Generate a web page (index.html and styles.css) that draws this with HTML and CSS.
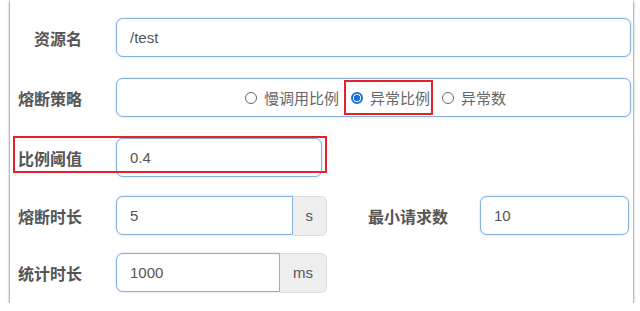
FILE: index.html
```html
<!DOCTYPE html>
<html lang="zh-CN">
<head>
    <meta charset="UTF-8">
    <title>熔断规则</title>
    <link rel="stylesheet" href="styles.css">
</head>
<body>
    <div class="card">
        <div class="row">
            <div class="label">资源名</div>
            <div class="field wide">/test</div>
        </div>
        <div class="row">
            <div class="label">熔断策略</div>
            <div class="field wide radio-group">
                <span class="option"><span class="dot"></span>慢调用比例</span>
                <span class="option marked"><span class="dot checked"></span>异常比例</span>
                <span class="option"><span class="dot"></span>异常数</span>
            </div>
        </div>
        <div class="row ratio-row">
            <!-- rote Markierung liegt über Label und Feld -->
            <div class="mark-box"></div>
            <div class="label">比例阈值</div>
            <div class="field ratio">0.4</div>
        </div>
        <div class="row time-row">
            <div class="label">熔断时长</div>
            <div class="group">
                <div class="field">5</div>
                <div class="addon">s</div>
            </div>
            <div class="label min-label">最小请求数</div>
            <div class="field count">10</div>
        </div>
        <div class="row last-row">
            <div class="label">统计时长</div>
            <div class="group">
                <div class="field">1000</div>
                <div class="addon">ms</div>
            </div>
        </div>
    </div>
</body>
</html>
```

FILE: styles.css
```css
html, body {
    margin: 0;
    background: #fff;
}
body {
    font-family: "Liberation Sans", Arial, "Noto Sans CJK SC", sans-serif;
    color: #555;
}
.card {
    box-sizing: border-box;
    height: 303px;
    margin: 0 7px 0 10px;
    padding-top: 18px;
    background: #fff;
    box-shadow: 0 2px 2px rgba(0, 0, 0, 0.5), -1px 0 2px rgba(0, 0, 0, 0.18), 1px 0 2px rgba(0, 0, 0, 0.18);
}
.row {
    position: relative;
    display: flex;
    align-items: center;
    height: 39px;
    margin-bottom: 21px;
}
.ratio-row {
    margin-bottom: 19px;
}
.time-row {
    margin-bottom: 18px;
}
.last-row {
    margin-bottom: 0;
}
.label {
    width: 72px;
    margin-right: 34px;
    text-align: right;
    font-family: "Noto Sans CJK SC", sans-serif;
    font-size: 16px;
    font-weight: bold;
    color: #555;
    flex-shrink: 0;
}
.field {
    box-sizing: border-box;
    height: 39px;
    display: flex;
    align-items: center;
    padding-left: 13px;
    border: 1px solid #86b0de;
    border-radius: 7px;
    box-shadow: 0 0 2px rgba(102, 160, 225, 0.5);
    font-size: 15px;
    color: #555;
    background: #fff;
}
.wide {
    width: 515px;
}
.ratio {
    width: 206px;
}
.radio-group {
    justify-content: center;
    padding-left: 0;
    font-family: "Noto Sans CJK SC", sans-serif;
    font-size: 15px;
    color: #666;
}
.option {
    display: inline-flex;
    align-items: center;
    padding: 5px 1px 5px 5px;
    border: 2px solid transparent;
    margin: 0 1px;
}
.option.marked {
    border-color: #e8202a;
}
.dot {
    box-sizing: border-box;
    width: 12px;
    height: 12px;
    border: 1px solid #666;
    border-radius: 50%;
    margin-right: 7px;
}
.dot.checked {
    border: 2px solid #1a6fe0;
    background: radial-gradient(circle, #1a6fe0 0 3px, #fff 3.5px);
}
.group {
    display: flex;
    width: 211px;
}
.group .field {
    flex: 1;
    border-radius: 7px 0 0 7px;
}
.addon {
    box-sizing: border-box;
    height: 40px;
    padding: 0 13px;
    display: flex;
    align-items: center;
    background: #eee;
    border: 1px solid #ddd;
    border-left: none;
    border-radius: 0 6px 6px 0;
    font-size: 15px;
    color: #555;
}
.min-label {
    width: auto;
    margin-left: 41px;
    margin-right: 32px;
}
.count {
    width: 149px;
}
.mark-box {
    position: absolute;
    left: 3px;
    top: -2px;
    width: 314px;
    height: 37px;
    box-sizing: border-box;
    border: 2px solid #e8202a;
}
```
